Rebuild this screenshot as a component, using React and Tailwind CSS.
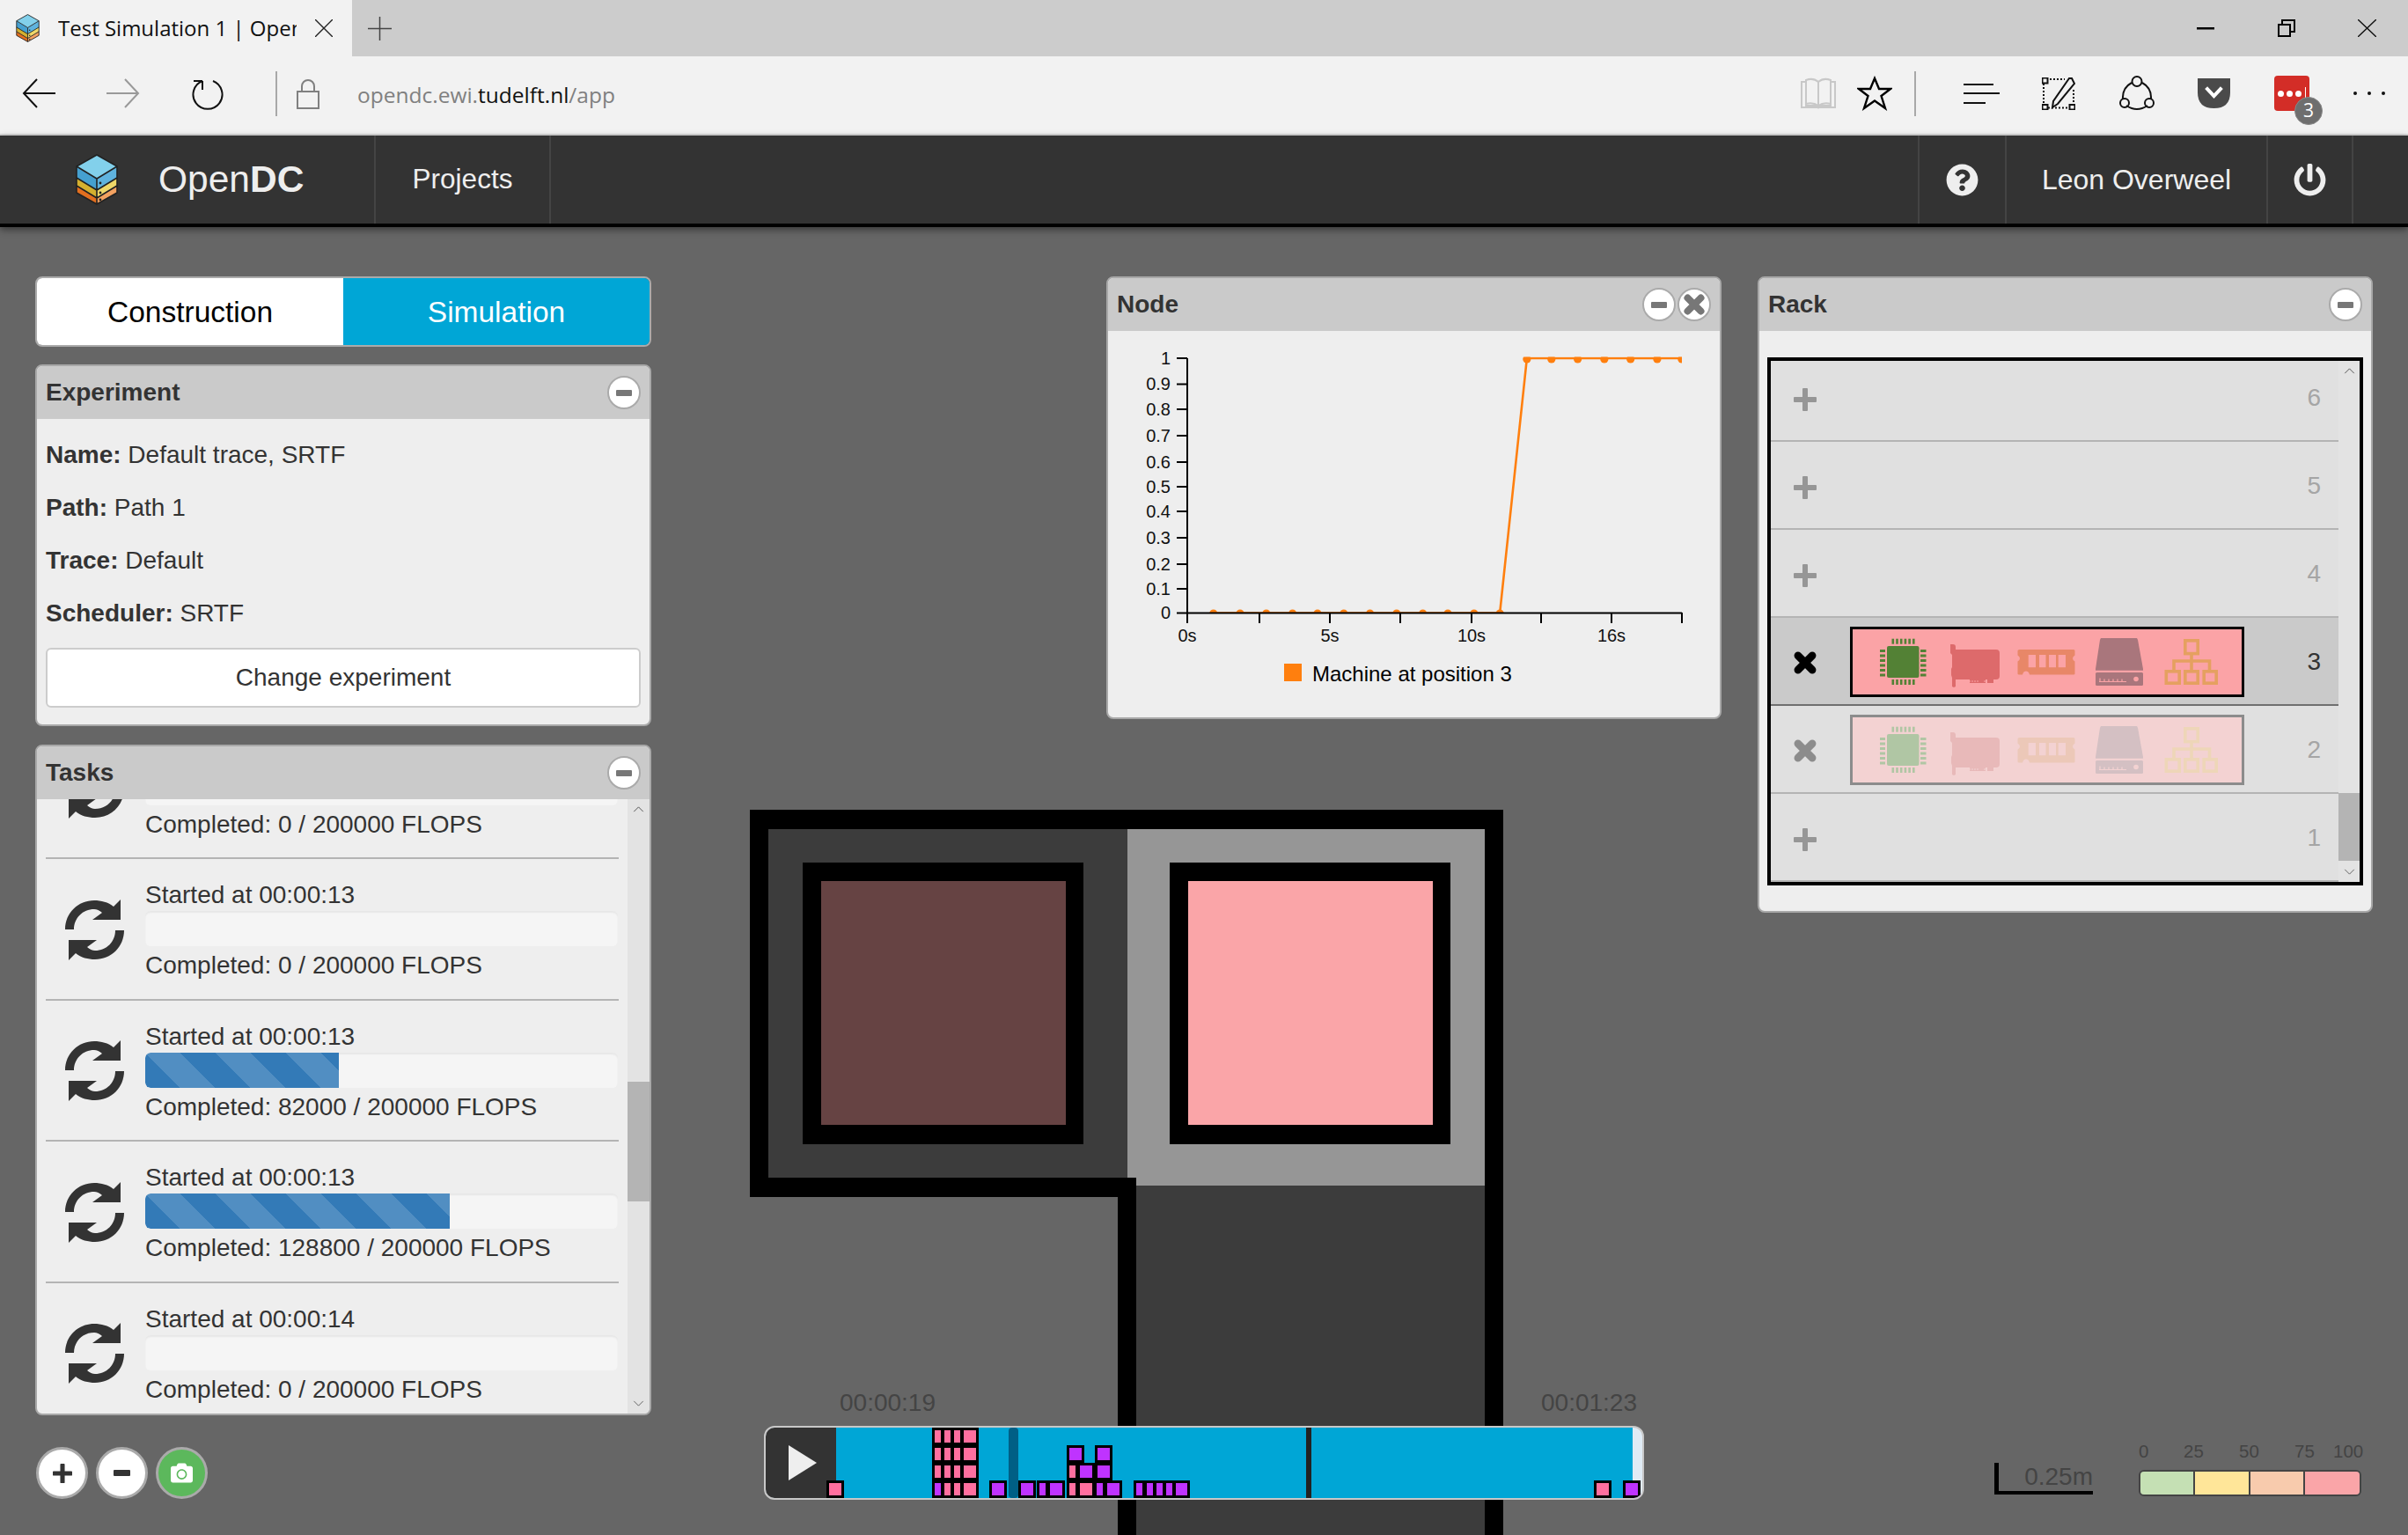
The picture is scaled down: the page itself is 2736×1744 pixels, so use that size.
import React from "react";
import { FaCamera, FaPowerOff, FaQuestionCircle } from "react-icons/fa";

function Logo({ className }) {
  return (
    <svg viewBox="0 0 48 58" className={className}>
      <path d="M1 14 24 28V44L1 30Z" fill="#45a0d0" />
      <path d="M47 14 24 28V44L47 30Z" fill="#5fb3de" />
      <path d="M1 27 24 41V50L1 36Z" fill="#d4b02f" />
      <path d="M47 27 24 41V50L47 36Z" fill="#efd868" />
      <path d="M1 36 24 50V57L1 44Z" fill="#e26f1f" />
      <path d="M47 36 24 50V57L47 44Z" fill="#f3a160" />
      <path d="M24 1 47 14 24 28 1 14Z" fill="#82d0eb" />
      <path d="M24 1 47 14V44L24 57 1 44V14Z M1 14 24 28 47 14M24 28V57M1 27 24 41 47 27M1 36 24 50 47 36" fill="none" stroke="#222" strokeWidth="1.6" strokeLinejoin="round" />
      <circle cx="28" cy="33" r="1.4" fill="#222" />
      <circle cx="28" cy="44" r="1.4" fill="#222" />
      <circle cx="28" cy="52" r="1.4" fill="#222" />
    </svg>
  );
}

function Sync() {
  return (
    <svg viewBox="0 0 67 69" className="w-[67px] h-[69px] fill-[#333]">
      <path d="M0 34C0 15 15 1 33 1C41 1 49 3 55 8L63 0V23H31L42 15C39 12.500 36 11 33 11C20 11 10 21 10 34Z" />
      <path d="M67 35C67 54 52 68 34 68C26 68 18 66 12 61L4 69V46H36L25 54C28 56.500 31 58 34 58C47 58 57 48 57 35Z" />
    </svg>
  );
}

function RoundButton({ children, className = "" }) {
  return (
    <div className={`w-[38px] h-[38px] rounded-full bg-white border-2 border-[#aaaaaa] flex items-center justify-center ${className}`}>
      {children}
    </div>
  );
}

function Minus({ className = "bg-[#777777]" }) {
  return <div className={`w-[18px] h-[7px] rounded-[1px] ${className}`} />;
}

function Cross({ className }) {
  return (
    <svg viewBox="0 0 26 26" className={className}>
      <path d="M10 1Q10 0 11 0h4Q16 0 16 1V10h9Q26 10 26 11v4Q26 16 25 16H16v9Q16 26 15 26h-4Q10 26 10 25V16H1Q0 16 0 15v-4Q0 10 1 10H10Z" />
    </svg>
  );
}

function Times({ className }) {
  return (
    <svg viewBox="0 0 24 24" className={className}>
      <path d="M4.500 4.500 19.500 19.500M19.500 4.500 4.500 19.500" fill="none" strokeWidth="8" strokeLinecap="round" />
    </svg>
  );
}

function Panel({ title, buttons, className = "", bodyClass = "", children }) {
  return (
    <div className={`rounded-lg border-2 border-[#a8a8a8] bg-[#eeeeee] overflow-hidden flex flex-col ${className}`}>
      <div className="h-[60px] shrink-0 bg-[#cacaca] flex items-center justify-between pl-[10px] pr-[10px]">
        <span className="text-[28px] font-bold text-[#333]">{title}</span>
        <div className="flex gap-[2px]">{buttons}</div>
      </div>
      <div className={bodyClass}>{children}</div>
    </div>
  );
}

const tasks = [
  ["Started at 00:00:13", 0, "Completed: 0 / 200000 FLOPS"],
  ["Started at 00:00:13", 0, "Completed: 0 / 200000 FLOPS"],
  ["Started at 00:00:13", 41, "Completed: 82000 / 200000 FLOPS"],
  ["Started at 00:00:13", 64.4, "Completed: 128800 / 200000 FLOPS"],
  ["Started at 00:00:14", 0, "Completed: 0 / 200000 FLOPS"],
];

function TaskRow({ started, pct, done }) {
  return (
    <div className="h-[160.5px] shrink-0 flex items-center border-b-2 border-[#b4b4b4] text-[28px] leading-[40px] text-[#333]">
      <div className="w-[113px] flex justify-center shrink-0 pr-[2px] pt-[2px]">
        <Sync />
      </div>
      <div className="flex-1 min-w-0 pr-[1px]">
        <div className="h-[40px] pt-[2px]">{started}</div>
        <div className="h-[40px] rounded-md bg-[#f5f5f5] shadow-[inset_0_2px_2px_rgba(0,0,0,0.06)] overflow-hidden">
          <div
            className="h-full bg-[#337ab7] bg-[linear-gradient(45deg,rgba(255,255,255,.15)_25%,transparent_25%,transparent_50%,rgba(255,255,255,.15)_50%,rgba(255,255,255,.15)_75%,transparent_75%,transparent)] bg-[length:80px_80px] rounded-l-md"
            style={{ width: `${pct}%` }}
          />
        </div>
        <div className="h-[40px] pt-[2px]">{done}</div>
      </div>
    </div>
  );
}

function ScrollTrack({ className, thumbClass }) {
  return (
    <div className={`relative shrink-0 bg-[#e3e3e3] ${className}`}>
      <svg viewBox="0 0 14 8" className="absolute top-[8px] left-[6px] w-[13px] h-[7px] fill-none stroke-[#444] stroke-1">
        <path d="M1 7 7 1l6 6" />
      </svg>
      <svg viewBox="0 0 14 8" className="absolute bottom-[8px] left-[6px] w-[13px] h-[7px] fill-none stroke-[#555] stroke-1">
        <path d="M1 1l6 6 6-6" />
      </svg>
      <div className={`absolute inset-x-0 bg-[#b4b4b4] ${thumbClass}`} />
    </div>
  );
}

function Chart() {
  const yTicks = [
    [407, "1"], [436.6, "0.9"], [465, "0.8"], [495, "0.7"], [525, "0.6"], [553, "0.5"],
    [581, "0.4"], [611, "0.3"], [641, "0.2"], [669, "0.1"], [696.5, "0"],
  ];
  const xTicks = [1349, 1431, 1511, 1591, 1672, 1751, 1831, 1911];
  const xLabels = [[1349, "0s"], [1511, "5s"], [1672, "10s"], [1831, "16s"]];
  const low = [298, 363, 427, 491, 552, 616, 680, 745, 809, 870, 934, 997].map((v) => 1240 + v / 2.148);
  const high = [1063, 1123, 1187, 1252, 1316, 1381, 1441].map((v) => 1240 + v / 2.148);
  return (
    <svg viewBox="1259 376 695 439" className="w-[695px] h-[439px] block">
      <defs>
        <clipPath id="plot">
          <rect x="1349" y="405.5" width="562" height="291" />
        </clipPath>
      </defs>
      <g clipPath="url(#plot)">
        <path d={`M${low[0]} 696.5H${low[11]}L${high[0]} 407H1911`} fill="none" stroke="#ff7f0e" strokeWidth="2.6" />
        {low.map((x) => <circle key={x} cx={x} cy="697" r="4.6" fill="#ff7f0e" />)}
        {high.map((x) => <circle key={x} cx={x} cy="408" r="4.6" fill="#ff7f0e" />)}
      </g>
      <path d="M1349 407V696.5H1911" fill="none" stroke="#000" strokeWidth="2" />
      {yTicks.map(([y, t]) => (
        <g key={t}>
          <path d={`M1337 ${y}H1349`} stroke="#000" strokeWidth="2" />
          <text x="1330" y={y + 6.5} textAnchor="end" fontSize="20" fill="#111">{t}</text>
        </g>
      ))}
      {xTicks.map((x) => <path key={x} d={`M${x} 696V708`} stroke="#000" strokeWidth="2" />)}
      {xLabels.map(([x, t]) => (
        <text key={t} x={x} y="728.5" textAnchor="middle" fontSize="20" fill="#111">{t}</text>
      ))}
      <rect x="1459" y="754" width="20" height="20" fill="#ff7f0e" />
      <text x="1491" y="774" fontSize="24" fill="#000">Machine at position 3</text>
    </svg>
  );
}

const FULL = { cpu: "#538135", gpu: "#dd6a6b", ram: "#e88768", hdd: "#a9767c", net: "#e5a060", bg: "#fba3a6" };
const FADED = { cpu: "#b0c6a4", gpu: "#e8b9b9", ram: "#ecc8b8", hdd: "#d4c0c3", net: "#eed6b8", bg: "#f3d2d2" };

function UnitIcons({ c }) {
  const fp = [2151.5, 2156.2, 2160.9, 2165.6, 2170.3, 2175];
  const fy = [738, 743.5, 749, 754.5, 760, 765.5];
  return (
    <svg viewBox="2105 715 442 74" className="w-[442px] h-[74px] block">
      <g fill={c.cpu}>
        <rect x="2144" y="734" width="36.5" height="36" rx="2" />
        {fp.map((x) => <rect key={x} x={x - 2} y="725.7" width="2.6" height="6" />)}
        {fp.map((x) => <rect key={x} x={x - 2} y="772" width="2.6" height="6" />)}
        {fy.map((y) => <rect key={y} x="2136" y={y} width="6" height="3" />)}
        {fy.map((y) => <rect key={y} x="2182" y={y} width="6.5" height="3" />)}
      </g>
      <path fill={c.gpu} d="M2216 732h3q3 0 3 3v3h46q4 0 4 4v26q0 4-4 4h-3v4h-7v-4h-2v4h-18v-4h-16v8l-2 1-2-1v-10l-1-3v-7l1-2v-14l-2-2z" />
      <path d="M2235 773v2m3-2v2m3-2v2m3-2v2m3-2v2m8-2v2" stroke={c.bg} strokeWidth="1" />
      <path fillRule="evenodd" fill={c.ram} d="M2296 738h60q1.500 0 1.500 1.500v5q-2.500 1.500-2.500 3.500t2.500 3.500v14q0 1-1.500 1h-50q-1-4-4-4t-4 4h-4q-1.500 0-1.500-1v-14q2.500-1.500 2.500-3.500t-2.500-3.500v-5q0-1.500 2-1.500zM2304.700 744v14.300h8.300V744zM2317 744v14.300h7.500V744zM2328 744v14.300h8V744zM2338.700 744v14.300h8.300V744z" />
      <g fill={c.hdd}>
        <path d="M2387 725h41l1 2 6 33v1.700h-54V760l5-33z" />
        <rect x="2381" y="764" width="54" height="15" rx="1.500" />
      </g>
      <path d="M2385 774.500h31m-30-4v4m5-3v3m5-3v3m5-3v3m5-3v3m5-3v3" stroke={c.bg} strokeWidth="1.200" fill="none" />
      <circle cx="2427" cy="771.500" r="2.800" fill={c.bg} />
      <g fill="none" stroke={c.net} strokeWidth="3.600">
        <rect x="2482.800" y="727.800" width="14.400" height="14.800" />
        <rect x="2461.300" y="762.800" width="14.900" height="13.400" />
        <rect x="2482.800" y="762.800" width="14.400" height="13.400" />
        <rect x="2504.200" y="762.800" width="14" height="13.400" />
        <path d="M2490 743v18M2470 761v-10h40.500v10" />
      </g>
    </svg>
  );
}

function RackSlot({ n, state }) {
  const selected = state === "selected";
  const filled = state === "filled";
  return (
    <div
      className={`h-[100px] shrink-0 flex items-center border-b-2 ${
        selected ? "bg-[#cacaca] border-[#6f6f6f]" : "bg-[#e0e0e0] border-[#b4b4b4]"
      }`}
    >
      <div className="w-[90px] pl-[26px] pt-[4px] shrink-0 flex items-center">
        {selected ? (
          <Times className="w-[26px] h-[26px] stroke-black" />
        ) : filled ? (
          <Times className="w-[26px] h-[26px] stroke-[#8c8c8c]" />
        ) : (
          <Cross className="w-[26px] h-[26px] fill-[#969696] mt-[2px]" />
        )}
      </div>
      {selected && (
        <div className="w-[448px] h-[80px] mt-[2px] border-[3px] border-black bg-[#fba3a6]">
          <UnitIcons c={FULL} />
        </div>
      )}
      {filled && (
        <div className="w-[448px] h-[80px] mt-[2px] border-[3px] border-[#8c8c8c] bg-[#f3d2d2]">
          <UnitIcons c={FADED} />
        </div>
      )}
      <div className={`ml-auto mr-[20px] pt-[2px] text-[28px] leading-none ${selected ? "text-[#333]" : "text-[#a5a5a5]"}`}>{n}</div>
    </div>
  );
}

const PINK = "bg-[#ff6f9f]";
const PURPLE = "bg-[#bf33ff]";
// [left, width, row, colour]: page x coordinates, rows counted from the bottom of the timeline
const marks = [
  [939, 20, 0, PINK],
  [1059, 13, 0, PURPLE], [1070, 13, 0, PINK], [1081, 13, 0, PINK], [1092, 20, 0, PINK],
  [1059, 13, 1, PINK], [1070, 13, 1, PINK], [1081, 13, 1, PINK], [1092, 20, 1, PINK],
  [1059, 13, 2, PINK], [1070, 13, 2, PINK], [1081, 13, 2, PINK], [1092, 20, 2, PINK],
  [1059, 13, 3, PINK], [1070, 13, 3, PINK], [1081, 13, 3, PINK], [1092, 20, 3, PINK],
  [1124, 20, 0, PURPLE],
  [1157, 20, 0, PURPLE], [1178, 13, 0, PURPLE], [1190, 20, 0, PURPLE],
  [1212, 13, 0, PINK], [1224, 20, 0, PINK], [1243, 13, 0, PURPLE], [1255, 20, 0, PURPLE],
  [1212, 13, 1, PINK], [1224, 20, 1, PURPLE], [1244, 20, 1, PURPLE],
  [1212, 20, 2, PURPLE], [1244, 20, 2, PURPLE],
  [1288, 13, 0, PURPLE], [1300, 13, 0, PURPLE], [1311, 13, 0, PURPLE], [1322, 13, 0, PURPLE], [1333, 19, 0, PURPLE],
  [1811, 20, 0, PINK], [1844, 20, 0, PURPLE],
];

function Timeline() {
  return (
    <div className="absolute left-[868px] top-[1362px] w-[1000px] h-[84px] border-2 border-[#c8c8c8] rounded-xl bg-[#e0ebf5] overflow-hidden">
      <div className="flex h-full">
        <div className="w-[80px] h-full bg-[#333] flex items-center justify-center pl-[3px]">
          <svg viewBox="0 0 32 40" className="w-[32px] h-[40px] fill-[#eeeeee]"><path d="M0 0 32 20 0 40Z" /></svg>
        </div>
        <div className="w-[905px] h-full bg-[#00a6d6]" />
      </div>
      {marks.map(([x, w, row, c], i) => (
        <div
          key={i}
          className={`absolute border-[3px] border-black ${c}`}
          style={{ left: x - 870, width: w, height: 20, bottom: row * 20 }}
        />
      ))}
      <div className="absolute left-[276px] w-[11px] top-0 bottom-0 bg-[#005f85] rounded-sm" />
      <div className="absolute left-[614px] w-[6px] top-0 bottom-0 bg-[#222]" />
    </div>
  );
}

function Room() {
  return (
    <>
      <div className="absolute left-[852px] top-[662px] w-[856px] h-[824px] bg-black" />
      <div className="absolute left-[873px] top-[684px] w-[408px] h-[396px] bg-[#3c3c3c]" />
      <div className="absolute left-[1281px] top-[684px] w-[406px] h-[396px] bg-[#969696]" />
      <div className="absolute left-[1291px] top-[1080px] w-[396px] h-[9px] bg-[#969696]" />
      <div className="absolute left-[1291px] top-[1089px] w-[396px] h-[397px] bg-[#3c3c3c]" />
      <div className="absolute left-[852px] top-[1102px] w-[418px] h-[384px] bg-[#666666]" />
      <div className="absolute left-[912px] top-[722px] w-[319px] h-[320px] bg-black p-[21px]">
        <div className="w-[278px] h-[277px] bg-[#664343]" />
      </div>
      <div className="absolute left-[1329px] top-[722px] w-[319px] h-[320px] bg-black p-[21px]">
        <div className="w-[278px] h-[277px] bg-[#faa5a8]" />
      </div>
    </>
  );
}

function Tab() {
  return (
    <div className="flex items-center h-[64px] w-[400px] bg-[#f2f2f2]">
      <Logo className="ml-[18px] w-[27px] h-[32px] shrink-0" />
      <div className="ml-[21px] w-[271px] overflow-hidden whitespace-nowrap text-[24px] text-[#111] font-['Open_Sans',sans-serif]">
        Test Simulation 1 | OpenDC
      </div>
      <svg viewBox="0 0 20 20" className="ml-[21px] w-[20px] h-[20px] stroke-[#222] stroke-[1.4]"><path d="M0 0 20 20M20 0 0 20" /></svg>
    </div>
  );
}

function TitleBar() {
  return (
    <div className="h-[64px] bg-[#cccccc] flex items-center">
      <Tab />
      <svg viewBox="0 0 27 27" className="ml-[18px] w-[27px] h-[27px] stroke-[#444] stroke-[1.5]"><path d="M0 13.500H27M13.500 0V27" /></svg>
      <svg viewBox="0 0 20 4" className="ml-auto w-[20px] h-[4px] fill-black"><rect width="20" height="2.500" y="1" /></svg>
      <svg viewBox="0 0 20 20" className="ml-[72px] w-[20px] h-[20px] fill-none stroke-black stroke-2"><path d="M1 6h13v13H1zM5 6V1h14v13h-5" /></svg>
      <svg viewBox="0 0 21 20" className="ml-[71px] mr-[36px] w-[21px] h-[20px] stroke-[#111] stroke-[1.4]"><path d="M0 0 21 20M21 0 0 20" /></svg>
    </div>
  );
}

function AddressBar() {
  return (
    <div className="h-[90px] bg-[#f2f2f2] border-b-2 border-[#d6d6d6] flex items-center pb-[4px]">
      <svg viewBox="0 0 38 34" className="ml-[25px] w-[38px] h-[34px] fill-none stroke-[#111] stroke-2"><path d="M38 17H2M17 1 2 17l15 16" /></svg>
      <svg viewBox="0 0 38 34" className="ml-[58px] w-[38px] h-[34px] fill-none stroke-[#999] stroke-2"><path d="M0 17h36M21 1l15 16-15 16" /></svg>
      <svg viewBox="0 0 36 38" className="ml-[59px] w-[36px] h-[38px] fill-none stroke-[#111] stroke-2"><path d="M24 5a16.500 16.500 0 1 1-12 0M12 5V15M12 5 2 5" /></svg>
      <div className="ml-[59px] w-[2px] h-[51px] bg-[#a8a8a8]" />
      <svg viewBox="0 0 26 35" className="ml-[22px] w-[26px] h-[35px] fill-none stroke-[#808080] stroke-2"><path d="M1 15h24v19H1zM6 15V9a7 7 0 0 1 14 0v6" /></svg>
      <div className="ml-[43px] pt-[4px] text-[24.5px] whitespace-nowrap text-[#808080] font-['Open_Sans',sans-serif]">
        opendc.ewi.<span className="text-[#111]">tudelft.nl</span>/app
      </div>
      <svg viewBox="0 0 40 36" className="ml-auto w-[40px] h-[36px] fill-none stroke-[#c8c8c8] stroke-2"><path d="M1 5h5v27h13l1 2 1-2h13V5h5v29H1zM6 3q8-3 14 2v27q-6-4-14-2zM34 3q-8-3-14 2v27q6-4 14-2z" /></svg>
      <svg viewBox="0 0 40 40" className="ml-[24px] w-[40px] h-[40px] fill-none stroke-black stroke-[2.4]"><path d="M20 3 25 15H38L27.500 23 32 37 20 28.500 8 37 12.500 23 2 15H15Z" /></svg>
      <div className="ml-[25px] w-[2px] h-[51px] bg-[#a8a8a8]" />
      <svg viewBox="0 0 41 24" className="ml-[54px] w-[41px] h-[24px] stroke-[#111] stroke-2"><path d="M0 2H34M0 12H41M0 23H25" /></svg>
      <svg viewBox="0 0 38 37" className="ml-[48px] w-[38px] h-[37px] fill-none stroke-[#111]">
        <path d="M2 7V32M36 14V32M7 34.500H31M9 2H26" strokeWidth="2" strokeDasharray="2 2" />
        <rect x="0.500" y="0.500" width="6" height="6" strokeWidth="2" />
        <rect x="0.500" y="31" width="6" height="5.500" strokeWidth="2" />
        <rect x="31.500" y="31" width="6" height="5.500" strokeWidth="2" />
        <path d="M13 27 12 34 18 30 37 7 34 1 31 1Z" fill="#f2f2f2" strokeWidth="2" />
      </svg>
      <svg viewBox="0 0 40 40" className="ml-[50px] w-[40px] h-[40px] fill-none stroke-[#111] stroke-2">
        <path d="M14 8Q3 14 4 27M26 8Q37 14 36 27M8 34Q20 42 32 34" />
        <circle cx="20" cy="6.500" r="5.500" />
        <circle cx="6" cy="31" r="5" />
        <circle cx="34" cy="31" r="5" />
      </svg>
      <svg viewBox="0 0 37 34" className="ml-[49px] w-[37px] h-[34px]">
        <path d="M0 0H37V16Q37 34 18.500 34T0 16Z" fill="#4a4a4a" />
        <path d="M11 12 18.500 20 26 12" fill="none" stroke="#fff" strokeWidth="4" strokeLinecap="square" />
      </svg>
      <div className="relative ml-[50px] w-[40px] h-[40px] rounded-sm bg-[#d32d27] flex items-center gap-[3px] pl-[4px]">
        <div className="w-[7px] h-[7px] rounded-full bg-white" />
        <div className="w-[7px] h-[7px] rounded-full bg-white" />
        <div className="w-[7px] h-[7px] rounded-full bg-white" />
        <div className="w-[1px] h-[14px] bg-white ml-[1px]" />
        <div className="absolute left-[23px] top-[24px] w-[32px] h-[32px] rounded-full bg-[#6e6e6e] border border-[#888] text-white text-[21px] flex items-center justify-center font-['Open_Sans',sans-serif]">3</div>
      </div>
      <div className="ml-[50px] mr-[26px] w-[36px] flex justify-between">
        <div className="w-[4px] h-[4px] rounded-full bg-[#111]" />
        <div className="w-[4px] h-[4px] rounded-full bg-[#111]" />
        <div className="w-[4px] h-[4px] rounded-full bg-[#111]" />
      </div>
    </div>
  );
}

function NavBar() {
  return (
    <div className="relative z-10 h-[104px] bg-[#333] border-b-4 border-black shadow-[0_3px_8px_rgba(0,0,0,0.45)] flex text-[#eeeeee] text-[31.5px]">
      <div className="w-[427px] border-r-2 border-[#444] flex items-center">
        <Logo className="ml-[86px] w-[48px] h-[58px]" />
        <div className="ml-[46px] text-[42.500px]">Open<span className="font-bold">DC</span></div>
      </div>
      <div className="w-[199px] border-r-2 border-[#444] flex items-center justify-center">Projects</div>
      <div className="ml-auto w-[2px] bg-[#444]" />
      <div className="w-[99px] flex items-center justify-center border-r-2 border-[#444]">
        <FaQuestionCircle className="w-[37px] h-[37px]" />
      </div>
      <div className="w-[297px] flex items-center justify-center border-r-2 border-[#444] text-[32px]">Leon Overweel</div>
      <div className="w-[97px] flex items-center justify-center border-r-2 border-[#444]">
        <FaPowerOff className="w-[37px] h-[37px]" />
      </div>
      <div className="w-[62px]" />
    </div>
  );
}

function Legend() {
  const labels = [["0", "left-[0px]"], ["25", "left-[51px]"], ["50", "left-[114px]"], ["75", "left-[177px]"], ["100", "left-[221px]"]];
  return (
    <div className="absolute left-[2430px] top-[1378px] w-[255px] h-[64px]">
      <div className="relative h-[34px] text-[20.5px] leading-[26px] text-[#444]">
        {labels.map(([t, c]) => <span key={t} className={`absolute top-0 ${c}`}>{t}</span>)}
      </div>
      <div className="flex w-[253px] h-[30px] rounded-md border-2 border-[#444] overflow-hidden">
        <div className="w-[62px] bg-[#c5e0b4] border-r-2 border-[#444]" />
        <div className="w-[63px] bg-[#ffe699] border-r-2 border-[#444]" />
        <div className="w-[62px] bg-[#f8cbad] border-r-2 border-[#444]" />
        <div className="flex-1 bg-[#faa5a8]" />
      </div>
    </div>
  );
}

export default function App() {
  return (
    <div className="w-[2736px] h-[1744px] overflow-hidden flex flex-col bg-[#666666] font-['Liberation_Sans',Arial,sans-serif]">
      <TitleBar />
      <AddressBar />
      <NavBar />
      <main className="relative flex-1">
        <Room />

        <div className="absolute left-[954px] top-[1316px] text-[28px] leading-[40px] text-[#444]">00:00:19</div>
        <div className="absolute left-[1751px] top-[1316px] text-[28px] leading-[40px] text-[#444]">00:01:23</div>
        <Timeline />

        <div className="absolute left-[2266px] top-[1404px] w-[112px] h-[36px] border-l-[5px] border-b-[4px] border-black text-[28px] leading-[32px] text-[#444] text-right">0.25m</div>
        <Legend />

        <div className="relative flex items-start pt-[56px] pl-[40px]">
          <div className="w-[700px] flex flex-col">
            <div className="h-[80px] rounded-lg border-2 border-[#aaaaaa] overflow-hidden flex text-[33.500px]">
              <div className="w-1/2 bg-white text-black flex items-center justify-center pt-[3px]">Construction</div>
              <div className="w-1/2 bg-[#00a6d6] text-white flex items-center justify-center pt-[3px]">Simulation</div>
            </div>

            <Panel
              title="Experiment"
              className="mt-[20px] h-[411px]"
              buttons={<RoundButton><Minus /></RoundButton>}
              bodyClass="px-[10px] pt-[21px] text-[28px] leading-[40px] text-[#333]"
            >
              <div className="mb-[20px]"><b>Name:</b> Default trace, SRTF</div>
              <div className="mb-[20px]"><b>Path:</b> Path 1</div>
              <div className="mb-[20px]"><b>Trace:</b> Default</div>
              <div className="mb-[19px]"><b>Scheduler:</b> SRTF</div>
              <div className="h-[68px] rounded-md border-2 border-[#cccccc] bg-white flex items-center justify-center">Change experiment</div>
            </Panel>

            <Panel
              title="Tasks"
              className="mt-[21px] h-[762px]"
              buttons={<RoundButton><Minus /></RoundButton>}
              bodyClass="flex flex-1 min-h-0"
            >
              <div className="flex-1 min-w-0 pl-[10px] pr-[10px] overflow-hidden">
                <div className="-mt-[92.5px] flex flex-col">
                  {tasks.map(([s, p, d], i) => <TaskRow key={i} started={s} pct={p} done={d} />)}
                </div>
              </div>
              <ScrollTrack className="w-[25px]" thumbClass="top-[321px] h-[136px]" />
            </Panel>

            <div className="mt-[36px] ml-[1px] flex gap-[9px]">
              <div className="w-[59px] h-[59px] rounded-full bg-white border-[3px] border-[#aaaaaa] flex items-center justify-center">
                <Cross className="w-[22px] h-[22px] fill-[#333]" />
              </div>
              <div className="w-[59px] h-[59px] rounded-full bg-white border-[3px] border-[#aaaaaa] flex items-center justify-center">
                <Minus className="bg-[#333] w-[19px]" />
              </div>
              <div className="w-[59px] h-[59px] rounded-full bg-[#5cb85c] border-[3px] border-[#aaaaaa] flex items-center justify-center">
                <FaCamera className="w-[25px] h-[25px] fill-white" />
              </div>
            </div>
          </div>

          <Panel
            title="Node"
            className="ml-[517px] w-[699px] h-[503px]"
            buttons={
              <>
                <RoundButton><Minus /></RoundButton>
                <RoundButton><Times className="w-[24px] h-[24px] stroke-[#777777]" /></RoundButton>
              </>
            }
          >
            <Chart />
          </Panel>

          <Panel
            title="Rack"
            className="ml-[41px] w-[699px] h-[723px]"
            buttons={<RoundButton><Minus /></RoundButton>}
            bodyClass="px-[9px] pt-[30px]"
          >
            <div className="h-[600px] border-4 border-black flex overflow-hidden">
              <div className="flex-1 min-w-0 overflow-hidden">
                <div className="-mt-[8px] flex flex-col">
                  <RackSlot n="6" />
                  <RackSlot n="5" />
                  <RackSlot n="4" />
                  <RackSlot n="3" state="selected" />
                  <RackSlot n="2" state="filled" />
                  <RackSlot n="1" />
                </div>
              </div>
              <ScrollTrack className="w-[24px]" thumbClass="top-[491px] h-[77px]" />
            </div>
          </Panel>
        </div>
      </main>
    </div>
  );
}
